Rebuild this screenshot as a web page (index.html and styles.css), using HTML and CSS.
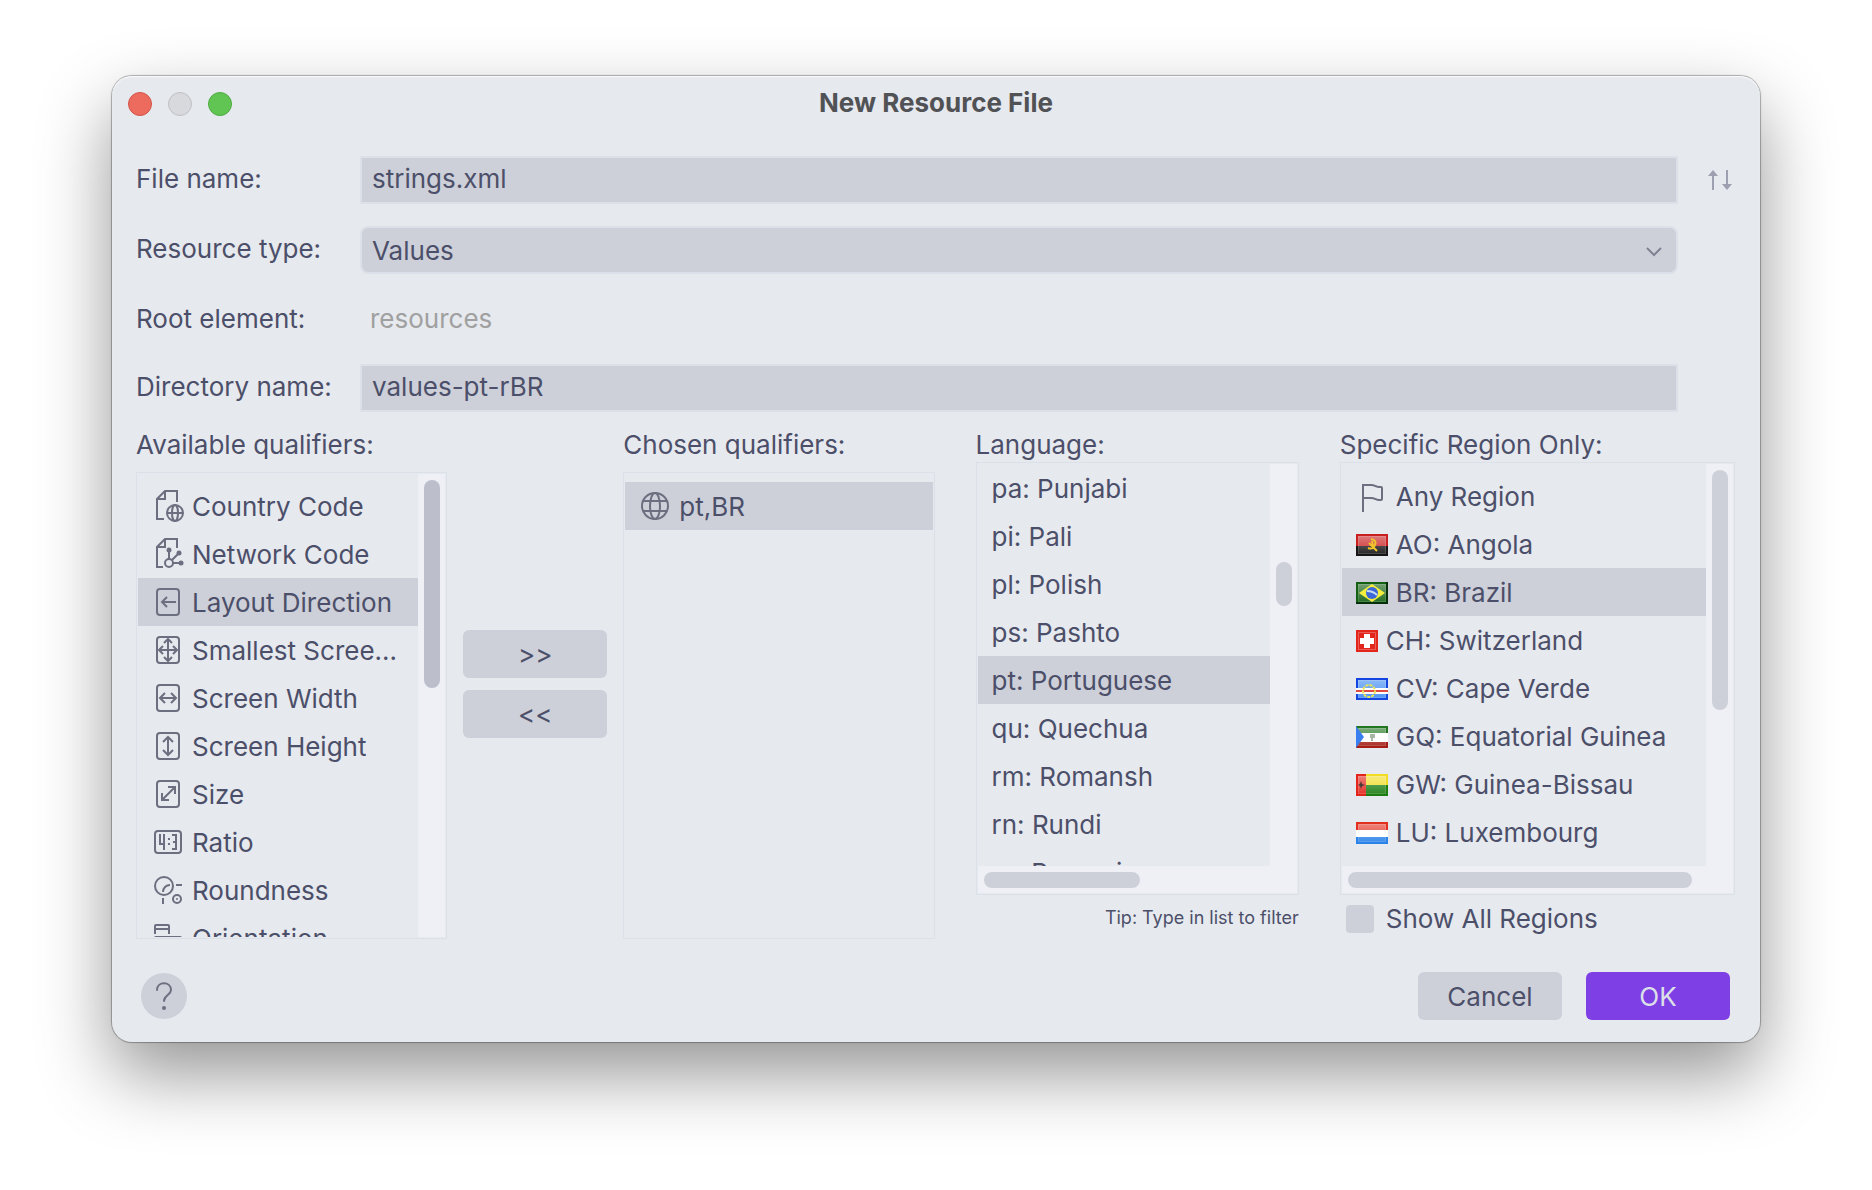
FILE: index.html
```html
<!DOCTYPE html>
<html lang="en">
<head>
<meta charset="utf-8">
<title>New Resource File</title>
<link rel="stylesheet" href="styles.css">
</head>
<body>
<svg class="defs" width="0" height="0" aria-hidden="true">
  <defs>
    <linearGradient id="gloss" x1="0" y1="0" x2="0" y2="1">
      <stop offset="0" stop-color="#fff" stop-opacity=".4"/>
      <stop offset="1" stop-color="#fff" stop-opacity=".08"/>
    </linearGradient>
    <symbol id="shine" viewBox="0 0 32 22">
      <rect x="2" y="2" width="28" height="18" fill="url(#gloss)"/>
      <rect x="2.500" y="2.500" width="27" height="17" fill="none" stroke="#fff" stroke-opacity=".15"/>
    </symbol>
  </defs>
</svg>
<main class="window">
  <header class="titlebar">
    <div class="lights">
      <button class="light light-close" type="button" aria-label="Close"></button>
      <button class="light light-min" type="button" aria-label="Minimize" disabled></button>
      <button class="light light-zoom" type="button" aria-label="Zoom"></button>
    </div>
    <h1 class="title">New Resource File</h1>
  </header>

  <form class="content">
    <div class="fields">
      <label class="label" for="file">File name:</label>
      <input class="field" id="file" type="text" value="strings.xml">
      <button class="swap" type="button" aria-label="Change order">
        <svg width="24" height="20" viewBox="0 0 24 20"><path d="M5 20V5M19 0v15" fill="none" stroke="#9ca0b0" stroke-width="2"/><path d="M0 6 5 0l5 6zM14 14l5 6 5-6z" fill="#9ca0b0"/></svg>
      </button>

      <label class="label" for="type">Resource type:</label>
      <div class="combo">
        <select class="field" id="type"><option>Values</option></select>
        <svg class="chevron" width="16" height="10" viewBox="0 0 16 10"><path d="M1 1l7 7 7-7" fill="none" stroke="#7f8292" stroke-width="2"/></svg>
      </div>

      <label class="label label-root" for="root">Root element:</label>
      <output class="root" id="root">resources</output>

      <label class="label" for="dir">Directory name:</label>
      <input class="field" id="dir" type="text" value="values-pt-rBR">
    </div>

    <div class="picker">
      <div class="transfer">
        <section class="column">
          <h2 class="caption" id="cap-available">Available qualifiers:</h2>
          <div class="pane pane-tall">
            <ul class="list list-padded" role="listbox" aria-labelledby="cap-available">
              <li class="row" role="option"><svg class="icon" viewBox="0 0 32 32"><path d="M12 29H5V9l8-8h12v11M13 1v8H5"/><circle cx="23" cy="23" r="8"/><ellipse cx="23" cy="23" rx="3" ry="8"/><path d="M15 23h16"/></svg><span>Country Code</span></li>
              <li class="row" role="option"><svg class="icon" viewBox="0 0 32 32"><path d="M11 29H5V9l8-8h12v9M13 1v8H5"/><circle cx="17" cy="25" r="4"/><path d="M17 21v-8M20 22l7-7M21 25h8"/><g class="solid"><circle cx="17" cy="12" r="2.500"/><circle cx="27" cy="15" r="2.500"/><circle cx="29" cy="25" r="2.500"/></g></svg><span>Network Code</span></li>
              <li class="row selected" role="option" aria-selected="true"><svg class="icon" viewBox="0 0 32 32"><rect x="5" y="3" width="22" height="26" rx="3"/><path d="M24 16H10M15 11l-5 5 5 5"/></svg><span>Layout Direction</span></li>
              <li class="row" role="option"><svg class="icon" viewBox="0 0 32 32"><rect x="5" y="3" width="22" height="26" rx="3"/><path d="M8 16h16M16 6v20M11 12l-4 4 4 4M21 12l4 4-4 4M12 9l4-4 4 4M12 23l4 4 4-4"/></svg><span>Smallest Screen Width</span></li>
              <li class="row" role="option"><svg class="icon" viewBox="0 0 32 32"><rect x="5" y="3" width="22" height="26" rx="3"/><path d="M8 16h16M13 11l-5 5 5 5M19 11l5 5-5 5"/></svg><span>Screen Width</span></li>
              <li class="row" role="option"><svg class="icon" viewBox="0 0 32 32"><rect x="5" y="3" width="22" height="26" rx="3"/><path d="M16 7v18M11 12l5-5 5 5M11 20l5 5 5-5"/></svg><span>Screen Height</span></li>
              <li class="row" role="option"><svg class="icon" viewBox="0 0 32 32"><rect x="5" y="3" width="22" height="26" rx="3"/><path d="M10 22 23 9M16 9h7v7M10 15v7h7"/></svg><span>Size</span></li>
              <li class="row" role="option"><svg class="icon" viewBox="0 0 32 32"><rect x="3" y="5" width="26" height="22" rx="3"/><path d="M8 8v10h5M12 8v16M20 9h4v14h-4M21 16h3M16 13h2M16 18h2"/></svg><span>Ratio</span></li>
              <li class="row" role="option"><svg class="icon" viewBox="0 0 32 32"><circle cx="12" cy="12" r="9"/><path d="M11 18c0-4 3-7 7-7M24 11h6M11 24v6"/><circle cx="25" cy="25" r="4"/><circle class="solid" cx="25" cy="25" r="1"/></svg><span>Roundness</span></li>
              <li class="row" role="option"><svg class="icon" viewBox="0 0 32 32"><path d="M3 12V4q0-1 1-1h12q1 0 1 1v8M3 7h14"/><rect x="3" y="15" width="26" height="14" rx="1"/></svg><span>Orientation</span></li>
            </ul>
            <div class="track track-v"><div class="thumb thumb-hot" style="height:208px"></div></div>
          </div>
        </section>

        <div class="movers">
          <button class="button" type="button" aria-label="Add qualifier">&gt;&gt;</button>
          <button class="button" type="button" aria-label="Remove qualifier">&lt;&lt;</button>
        </div>

        <section class="column">
          <h2 class="caption" id="cap-chosen">Chosen qualifiers:</h2>
          <div class="pane pane-tall pane-plain">
            <ul class="list list-padded" role="listbox" aria-labelledby="cap-chosen">
              <li class="row selected" role="option" aria-selected="true"><svg class="icon" viewBox="0 0 32 32"><circle cx="16" cy="16" r="13"/><ellipse cx="16" cy="16" rx="5" ry="13"/><path d="M4 11h24M4 21h24"/></svg><span>pt,BR</span></li>
            </ul>
          </div>
        </section>
      </div>

      <section class="column column-language">
        <h2 class="caption caption-tight" id="cap-language">Language:</h2>
        <div class="pane pane-short">
          <ul class="list" role="listbox" aria-labelledby="cap-language">
            <li class="row" role="option">pa: Punjabi</li>
            <li class="row" role="option">pi: Pali</li>
            <li class="row" role="option">pl: Polish</li>
            <li class="row" role="option">ps: Pashto</li>
            <li class="row selected" role="option" aria-selected="true">pt: Portuguese</li>
            <li class="row" role="option">qu: Quechua</li>
            <li class="row" role="option">rm: Romansh</li>
            <li class="row" role="option">rn: Rundi</li>
            <li class="row" role="option">ro: Romanian</li>
          </ul>
          <div class="track track-v"><div class="thumb" style="height:44px;margin-top:92px"></div></div>
          <div class="track track-h"><div class="thumb" style="width:156px"></div></div>
        </div>
        <p class="tip">Tip: Type in list to filter</p>
      </section>

      <section class="column column-region">
        <h2 class="caption caption-tight" id="cap-region">Specific Region Only:</h2>
        <div class="pane pane-short">
          <ul class="list list-padded" role="listbox" aria-labelledby="cap-region">
            <li class="row" role="option"><svg class="icon" viewBox="0 0 32 32"><path d="M7 32V5h8c4 0 5 2 8 2h2q1 0 1 1v11q0 1-1 1h-2c-3 0-4-2-8-2H7"/></svg><span>Any Region</span></li>
            <li class="row" role="option"><svg class="flag" viewBox="0 0 32 22"><path fill="#c8201f" d="M0 0h32v12H0z"/><path fill="#151515" d="M0 12h32v10H0z"/><use href="#shine"/><path d="M15 5q6 1 4 6-2 5-7 3M13 9l8 8M16 7l1 5" fill="none" stroke="#f0c52c" stroke-width="2"/></svg><span>AO: Angola</span></li>
            <li class="row selected" role="option" aria-selected="true"><svg class="flag" viewBox="0 0 32 22"><path fill="#136012" d="M0 0h32v22H0z"/><path fill="none" stroke="#06300a" stroke-width="2" d="M31 0v21H0"/><use href="#shine"/><path fill="#f5ee3d" d="M16 2 29 11 16 20 3 11z"/><circle cx="16" cy="11" r="6" fill="#3a68d8"/><path d="M11 9q6 0 10 4" fill="none" stroke="#c9dcf5" stroke-width="2"/></svg><span>BR: Brazil</span></li>
            <li class="row" role="option"><svg class="flag flag-square" viewBox="0 0 22 22"><path fill="#e2261c" d="M0 0h22v22H0z"/><path fill="none" stroke="#ea5c54" d="M2.500 2.500h17v17h-17z"/><path fill="#fff" d="M8 4h6v4h4v6h-4v4H8v-4H4V8h4z"/></svg><span>CH: Switzerland</span></li>
            <li class="row" role="option"><svg class="flag" viewBox="0 0 32 22"><path fill="#1445e0" d="M0 0h32v22H0z"/><path fill="#3f8bf2" d="M2 2h28v18H2z"/><use href="#shine"/><path fill="#fff" d="M0 10h32v6H0z"/><path fill="#e04a3f" d="M0 12h32v2H0z"/><circle cx="13" cy="13" r="6" fill="none" stroke="#e9e257" stroke-width="2" stroke-dasharray="3 1"/></svg><span>CV: Cape Verde</span></li>
            <li class="row" role="option"><svg class="flag" viewBox="0 0 32 22"><path fill="#22761f" d="M0 0h32v7H0z"/><path fill="#fff" d="M0 7h32v9H0z"/><path fill="#a51f17" d="M0 16h32v6H0z"/><use href="#shine"/><path fill="#3a7ff0" d="M0 0 8 11 0 22z"/><path fill="#a9b5a5" d="M14 8h5v4h-2v3h-2v-3h-1z"/></svg><span>GQ: Equatorial Guinea</span></li>
            <li class="row" role="option"><svg class="flag" viewBox="0 0 32 22"><path fill="#f0dc22" d="M10 0h22v11H10z"/><path fill="#1b7d12" d="M10 11h22v11H10z"/><path fill="#e2261c" d="M0 0h10v22H0z"/><use href="#shine"/><path fill="#453a35" d="m5 7 1 3 3 1-3 1-1 3-1-3-2-1 2-1z"/></svg><span>GW: Guinea-Bissau</span></li>
            <li class="row" role="option"><svg class="flag" viewBox="0 0 32 22"><path fill="#e2301f" d="M0 0h32v8H0z"/><path fill="#fff" d="M0 8h32v7H0z"/><path fill="#2b83ea" d="M0 15h32v7H0z"/><use href="#shine"/></svg><span>LU: Luxembourg</span></li>
          </ul>
          <div class="track track-v"><div class="thumb" style="height:240px"></div></div>
          <div class="track track-h"><div class="thumb" style="width:344px"></div></div>
        </div>
        <label class="check"><input type="checkbox">Show All Regions</label>
      </section>
    </div>

    <footer class="footer">
      <button class="help" type="button" aria-label="Help">
        <svg width="18" height="30" viewBox="0 0 18 30"><path d="M2 9c0-9 14-9 14 0 0 5-7 5-7 11" fill="none" stroke="#6c6f7f" stroke-width="2" stroke-linecap="round"/><circle cx="9" cy="27" r="2" fill="#6c6f7f"/></svg>
      </button>
      <button class="button" type="button">Cancel</button>
      <button class="button button-primary" type="submit">OK</button>
    </footer>
  </form>
</main>
</body>
</html>
```
FILE: styles.css
```css
:root {
  --base: #e6e9ee;
  --surface: #cdd0d9;
  --thumb-hot: #bcbfcb;
  --line: #dce0e8;
  --track: #eff0f5;
  --text: #4c4f69;
  --icon: #6c6f7f;
  --accent: #7e3fe4;
}

* {
  box-sizing: border-box;
}

body {
  margin: 0;
  padding: 76px 112px 148px;
  background: #fff;
  color: var(--text);
  font: 26px/32px Inter, "Liberation Sans", sans-serif;
}

button,
input,
select {
  margin: 0;
  border: 0;
  color: inherit;
  font: inherit;
}

.defs {
  position: absolute;
}

.window {
  border-radius: 20px;
  background: var(--base);
  box-shadow: inset 0 1px 1px #fafbfc, 0 0 1px 1px rgba(0, 0, 0, .3), 0 32px 72px rgba(0, 0, 0, .42);
}

.titlebar {
  display: grid;
  grid-template-columns: 1fr auto 1fr;
  align-items: center;
  height: 56px;
  padding: 0 16px;
}

.lights {
  display: flex;
  gap: 16px;
}

.light {
  width: 24px;
  height: 24px;
  padding: 0;
  border: 1px solid;
  border-radius: 50%;
}

.light-close {
  background: #ed6a5e;
  border-color: #d35549;
}

.light-min {
  background: #d8d9dd;
  border-color: #bfc0c4;
}

.light-zoom {
  background: #61c554;
  border-color: #4fac42;
}

.title {
  margin: 0;
  padding-bottom: 2px;
  color: #515255;
  font-size: 26px;
  font-weight: 700;
}

.content {
  padding: 24px 25px 22px 24px;
}

.fields {
  display: grid;
  grid-template-columns: 224px 1fr 57px;
  grid-template-rows: 48px 48px 46px 48px;
  row-gap: 22px;
  align-items: center;
}

.label {
  grid-column: 1;
  padding-bottom: 2px;
}

.label-root {
  padding-bottom: 0;
}

.field {
  width: 100%;
  height: 48px;
  padding: 0 10px 4px;
  border: 2px solid var(--line);
  background: var(--surface);
}

.combo {
  position: relative;
}

.combo .field {
  display: block;
  padding: 2px 10px 0;
  border-radius: 8px;
  appearance: none;
}

.chevron {
  position: absolute;
  top: 21px;
  right: 16px;
  pointer-events: none;
}

.root {
  padding-left: 10px;
  color: #a0a0a0;
}

.swap {
  display: flex;
  justify-self: end;
  padding: 0;
  margin-right: 3px;
  background: none;
}

.picker {
  display: flex;
  gap: 41px;
  padding-top: 17px;
}

.transfer {
  display: grid;
  grid-template-columns: 1fr 144px 1fr;
  gap: 16px;
  flex: 798 1 0;
}

.column {
  min-width: 0;
}

.column-language {
  flex: 323 1 0;
}

.column-region {
  flex: 395 1 0;
}

.caption {
  margin: 0 0 11px;
  font: inherit;
  white-space: nowrap;
}

.caption-tight {
  margin-bottom: 1px;
}

.pane {
  display: grid;
  grid-template-columns: minmax(0, 1fr) 27px;
  border: 1px solid var(--line);
  padding: 1px;
}

.pane-tall {
  grid-template-rows: 463px;
}

.pane-plain {
  grid-template-columns: minmax(0, 1fr);
}

.pane-short {
  grid-template-rows: 402px 27px;
}

.list {
  margin: 0;
  padding: 0;
  overflow: hidden;
  list-style: none;
}

.list-padded {
  padding-top: 8px;
}

.row {
  display: flex;
  align-items: center;
  gap: 8px;
  height: 48px;
  padding: 2px 14px 0;
  white-space: nowrap;
}

.row span {
  overflow: hidden;
  text-overflow: ellipsis;
}

.selected {
  background: var(--surface);
}

.icon {
  flex: none;
  width: 32px;
  height: 32px;
  margin-bottom: 2px;
  fill: none;
  stroke: var(--icon);
  stroke-width: 2;
}

.solid {
  fill: var(--icon);
  stroke: none;
}

.flag {
  flex: none;
  width: 32px;
  height: 22px;
}

.flag-square {
  width: 22px;
}

.track {
  padding: 6px 5px 5px 6px;
  background: var(--track);
}

.track-h {
  grid-column: 1 / -1;
}

.thumb {
  border-radius: 8px;
  background: var(--surface);
}

.track-h .thumb {
  height: 16px;
}

.thumb-hot {
  background: var(--thumb-hot);
}

.movers {
  display: flex;
  flex-direction: column;
  gap: 12px;
  padding-top: 201px;
}

.button {
  width: 144px;
  height: 48px;
  padding: 2px 0 0;
  border-radius: 6px;
  background: var(--surface);
}

.button-primary {
  background: var(--accent);
  color: #dce0e8;
}

.tip {
  margin: 7px 0 0;
  font-size: 18px;
  text-align: right;
}

.check {
  display: flex;
  align-items: center;
  gap: 12px;
  padding: 8px 6px 0;
}

.check input {
  width: 28px;
  height: 28px;
  border-radius: 4px;
  background: var(--surface);
  appearance: none;
}

.footer {
  display: flex;
  align-items: center;
  gap: 24px;
  padding: 33px 5px 0;
}

.help {
  display: grid;
  place-items: center;
  width: 46px;
  height: 46px;
  padding: 0;
  margin-right: auto;
  border-radius: 50%;
  background: var(--surface);
}
```
